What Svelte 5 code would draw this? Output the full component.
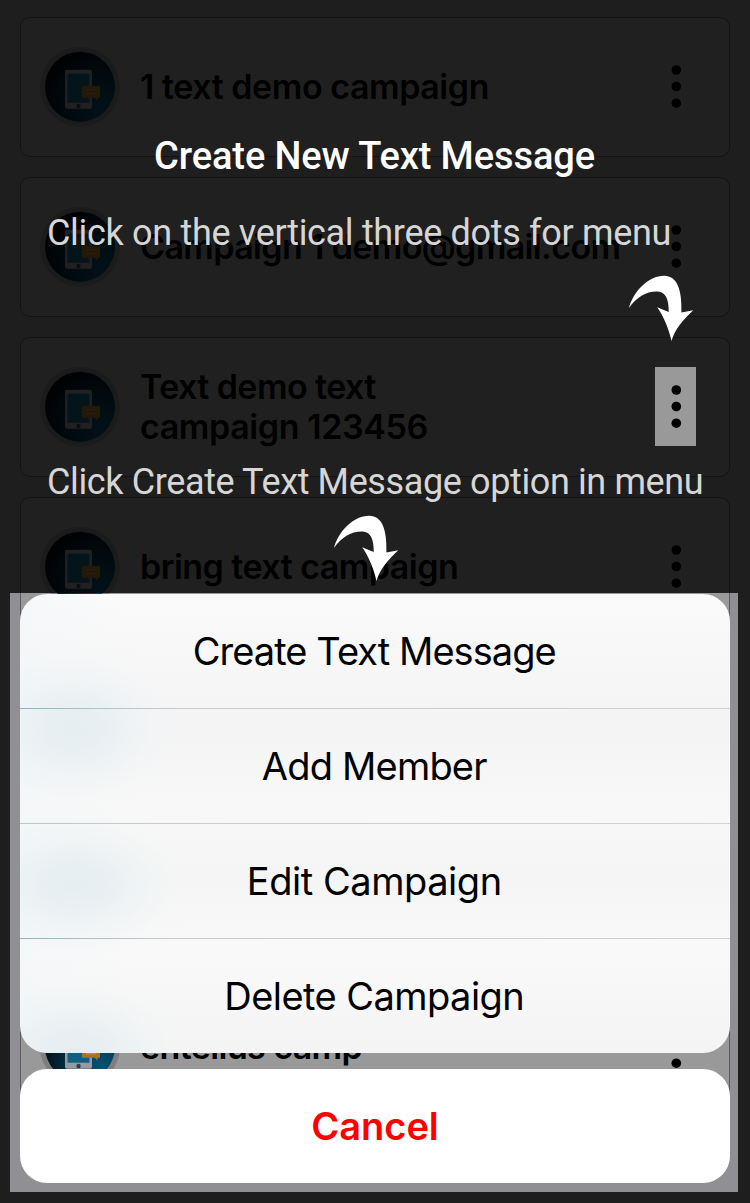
<script>
  const campaigns = [
    { lines: [{ text: '1 text demo campaign', ls: -0.45 }] },
    { lines: [{ text: 'Campaign 1 demo@gmail.com', ls: -0.64 }] },
    { lines: [{ text: 'Text demo text', ls: -0.58 }, { text: 'campaign 123456', ls: -0.4 }] },
    { lines: [{ text: 'bring text campaign', ls: -0.54 }] },
    { lines: [] },
    { lines: [] },
    { lines: [{ text: 'entellus camp', ls: -0.6 }] },
  ];
  const actions = [
    { label: 'Create Text Message', ls: -0.95 },
    { label: 'Add Member', ls: -0.8 },
    { label: 'Edit Campaign', ls: -0.45 },
    { label: 'Delete Campaign', ls: -0.55 },
  ];
</script>

{#snippet arrow()}
  <svg width="66" height="67" viewBox="0 0 66 67">
    <path d="M1 33C5 17 20 0.7 36.300 0.7C49 1 54.200 14 53.400 37.500L65.300 35.200C54.500 45 46.500 55 43.500 66C41 54 35.500 41 29.200 32.200L40.700 37C41 24 37.500 16.500 29.500 16.400C18.500 16 8.500 22 1 33Z" fill="#fff" />
  </svg>
{/snippet}

<main>
  <div class="list">
    {#each campaigns as c}
      <article>
        <svg class="avatar" width="80" height="80" viewBox="0 0.3 80 80">
          <defs>
            <radialGradient id="disc" cx=".8" cy=".78" r=".85">
              <stop offset="0" stop-color="#075273" />
              <stop offset=".55" stop-color="#033047" />
              <stop offset="1" stop-color="#000d14" />
            </radialGradient>
          </defs>
          <circle cx="40" cy="40" r="40" fill="#7e7e80" />
          <circle cx="40" cy="40" r="35" fill="url(#disc)" />
          <rect x="25" y="23" width="27" height="39" rx="2" fill="#98999f" />
          <rect x="27.5" y="27" width="22" height="29" fill="#106080" />
          <circle cx="38.5" cy="59.3" r="2.2" fill="#303b4b" />
          <path d="M42 39h18v12h-2.500v2.700l-3-2.700H42z" fill="#a5751d" />
          <path d="M46 43h10M46 47h10" stroke="#b58c42" stroke-width="1.500" />
        </svg>
        <h2>
          {#each c.lines as l}<span style:letter-spacing="{l.ls}px">{l.text}</span>{/each}
        </h2>
        <svg class="dots" width="12" height="44" viewBox="0.700 0.500 12 44">
          <circle cx="6" cy="5.500" r="4.800" /><circle cx="6" cy="22" r="4.800" /><circle cx="6" cy="38.700" r="4.800" />
        </svg>
      </article>
    {/each}
  </div>

  <svg class="dim" width="750" height="1203" viewBox="0 0 750 1203">
    <path fill-rule="evenodd" fill="#000" fill-opacity=".79" d="M0 0H750V1203H0ZM655 367H696V446H655ZM10 593H738V1192H10Z" />
  </svg>

  <h1>Create New Text Message</h1>
  <p class="hint first">Click on the vertical three dots for menu</p>
  <div class="arrow one">{@render arrow()}</div>
  <p class="hint second">Click Create Text Message option in menu</p>
  <div class="arrow two">{@render arrow()}</div>

  <div class="sheet">
    <div class="actions">
      {#each actions as a}
        <button style:letter-spacing="{a.ls}px">{a.label}</button>
      {/each}
    </div>
    <button class="cancel">Cancel</button>
  </div>
</main>

<style>
  :global(body) { margin: 0; }
  main {
    position: relative;
    width: 750px;
    height: 1203px;
    overflow: hidden;
    background: #8f8f94;
    font-family: Inter, sans-serif;
  }
  .list {
    display: flex;
    flex-direction: column;
    gap: 20px;
    padding: 17px 20px;
  }
  article {
    box-sizing: border-box;
    flex: none;
    height: 140px;
    display: flex;
    align-items: center;
    padding: 0 46px 0 19px;
    background: #999;
    border: 1px solid #5c5c5f;
    border-radius: 10px;
  }
  .avatar { flex: none; }
  h2 {
    flex: 1;
    margin: 0 0 0 20px;
    font-size: 34px;
    line-height: 40px;
    font-weight: 600;
    white-space: nowrap;
    color: #000;
  }
  h2 span { display: block; }
  .dots { flex: none; overflow: visible; }
  .dim { position: absolute; inset: 0; }
  h1, .hint {
    position: absolute;
    margin: 0;
    font-family: Roboto, sans-serif;
    white-space: nowrap;
  }
  h1 {
    left: 154px;
    top: 133px;
    font-size: 38px;
    line-height: 46px;
    font-weight: 500;
    letter-spacing: -0.1px;
    color: #fff;
  }
  .hint {
    left: 47px;
    font-size: 36px;
    line-height: 42px;
    font-weight: 400;
    color: #d6d6d6;
  }
  .first { top: 212px; letter-spacing: -0.32px; }
  .second { top: 461px; letter-spacing: -0.38px; }
  .arrow { position: absolute; line-height: 0; }
  .one { left: 628px; top: 275px; }
  .two { left: 333px; top: 515px; }
  .sheet {
    position: absolute;
    left: 20px;
    top: 594px;
    width: 710px;
    display: flex;
    flex-direction: column;
    gap: 16px;
  }
  .actions {
    display: flex;
    flex-direction: column;
    height: 459px;
    border-radius: 27px;
    overflow: hidden;
    background:
      radial-gradient(ellipse 115px 88px at 54px 134px, #e4edf0, #e7eff2e0 25%, #ecf2f490 55%, #f3f6f730 80%, #f6f7f800),
      radial-gradient(ellipse 125px 82px at 54px 290px, #e4edf0, #e7eff2e0 25%, #ecf2f490 55%, #f3f6f730 80%, #f6f7f800),
      radial-gradient(ellipse 125px 85px at 54px 459px, #e4edf0, #e7eff2e0 25%, #ecf2f490 55%, #f3f6f730 80%, #f6f7f800),
      linear-gradient(90deg, #f1f6f980, #f6f7f800 14%),
      linear-gradient(#fafafa, #f4f4f5 30%, #f8f8f8 46%, #f5f5f5 62%, #f9f9f9 78%, #f4f4f4);
  }
  button {
    flex: none;
    box-sizing: border-box;
    height: 115px;
    margin: 0;
    padding: 0;
    border: 0;
    background: none;
    font: 400 38px/46px Inter, sans-serif;
    color: #000;
    text-align: center;
  }
  .actions button { padding-right: 1.5px; }
  .actions button:not(:last-child) {
    border-bottom: 1px solid;
    border-image: linear-gradient(90deg, #8fb4c6, #a9c0cc 10%, #c5cacd 22%, #d0d0d1) 1;
  }
  .actions button:nth-child(2) {
    border-image: linear-gradient(90deg, #b9c6cb, #c9cccd 20%, #d0d2d3) 1;
  }
  .actions button:last-child { height: 113px; }
  .cancel {
    height: 114px;
    border-radius: 27px;
    background: #fff;
    color: #f00;
    font-weight: 600;
  }
</style>
